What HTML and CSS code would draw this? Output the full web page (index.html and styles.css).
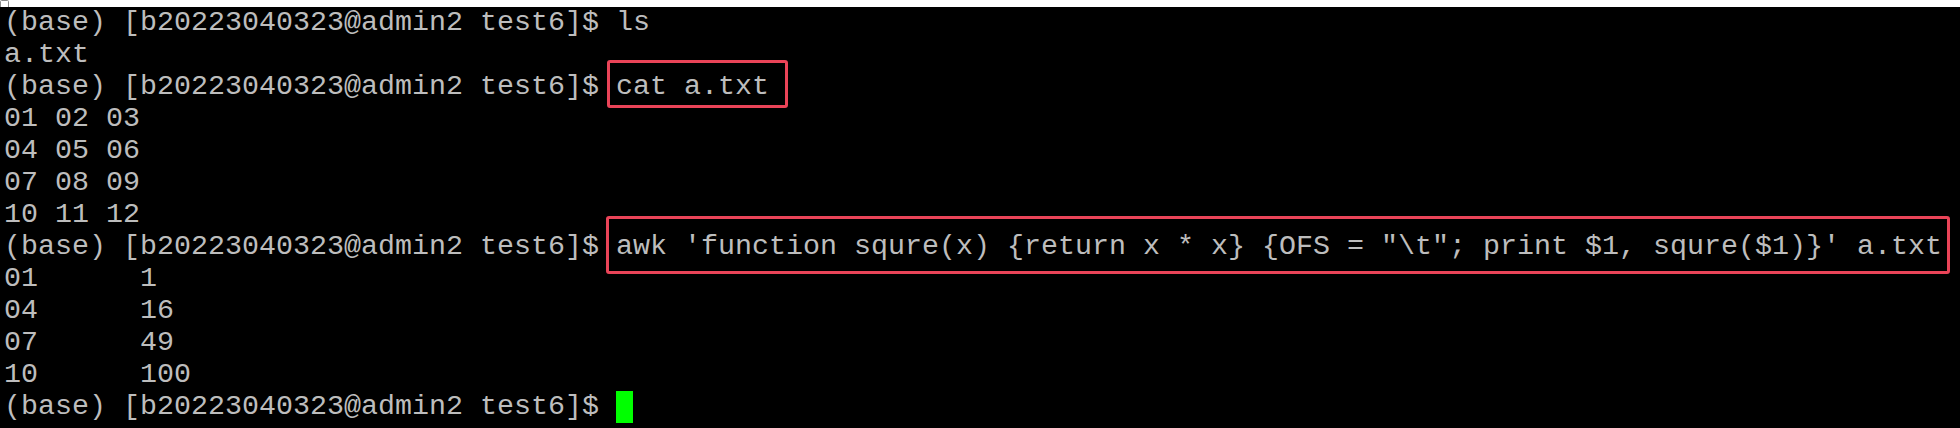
FILE: index.html
```html
<!DOCTYPE html>
<html>
<head>
<meta charset="utf-8">
<link rel="stylesheet" href="styles.css">
</head>
<body>
<div class="titlebar"><svg class="ticon" width="9" height="7" viewBox="0 0 9 7"><path d="M0.5 7V1.5Q0.5 0.5 1.5 0.5H7.5Q8.5 0.5 8.5 1.5V7" fill="none" stroke="#8a8a8a" stroke-width="1"/></svg></div>
<div class="term">
<div class="line">(base) [b20223040323@admin2 test6]$ ls</div>
<div class="line">a.txt</div>
<div class="line">(base) [b20223040323@admin2 test6]$ <span class="hl hl-cat">cat a.txt</span></div>
<div class="line">01 02 03</div>
<div class="line">04 05 06</div>
<div class="line">07 08 09</div>
<div class="line">10 11 12</div>
<div class="line">(base) [b20223040323@admin2 test6]$ <span class="hl hl-awk">awk 'function squre(x) {return x * x} {OFS = "\t"; print $1, squre($1)}' a.txt</span></div>
<div class="line">01      1</div>
<div class="line">04      16</div>
<div class="line">07      49</div>
<div class="line">10      100</div>
<div class="line">(base) [b20223040323@admin2 test6]$ <span class="cursor"> </span></div>
</div>
</body>
</html>
```
FILE: styles.css
```css
html, body {
  margin: 0;
  padding: 0;
  background: #000;
}
body {
  width: 1960px;
  height: 428px;
  overflow: hidden;
}
.titlebar {
  height: 7px;
  background: #fff;
  display: flex;
  align-items: flex-start;
}
.ticon {
  display: block;
}
.term {
  padding-left: 4px;
  font-family: "Liberation Mono", monospace;
  font-size: 28.33px;
  line-height: 32px;
  color: #bdbdbd;
}
.line {
  height: 32px;
  white-space: pre;
}
.hl {
  position: relative;
}
.hl::after {
  content: "";
  position: absolute;
  border: 3px solid #ea4458;
  border-radius: 3px;
}
.hl-cat::after {
  top: -10px;
  bottom: -5px;
  left: -9px;
  right: -19px;
}
.hl-awk::after {
  top: -14px;
  bottom: -11px;
  left: -10px;
  right: -8px;
}
.cursor {
  display: inline-block;
  width: 17px;
  height: 32px;
  background: #00ff00;
  vertical-align: top;
}
```
